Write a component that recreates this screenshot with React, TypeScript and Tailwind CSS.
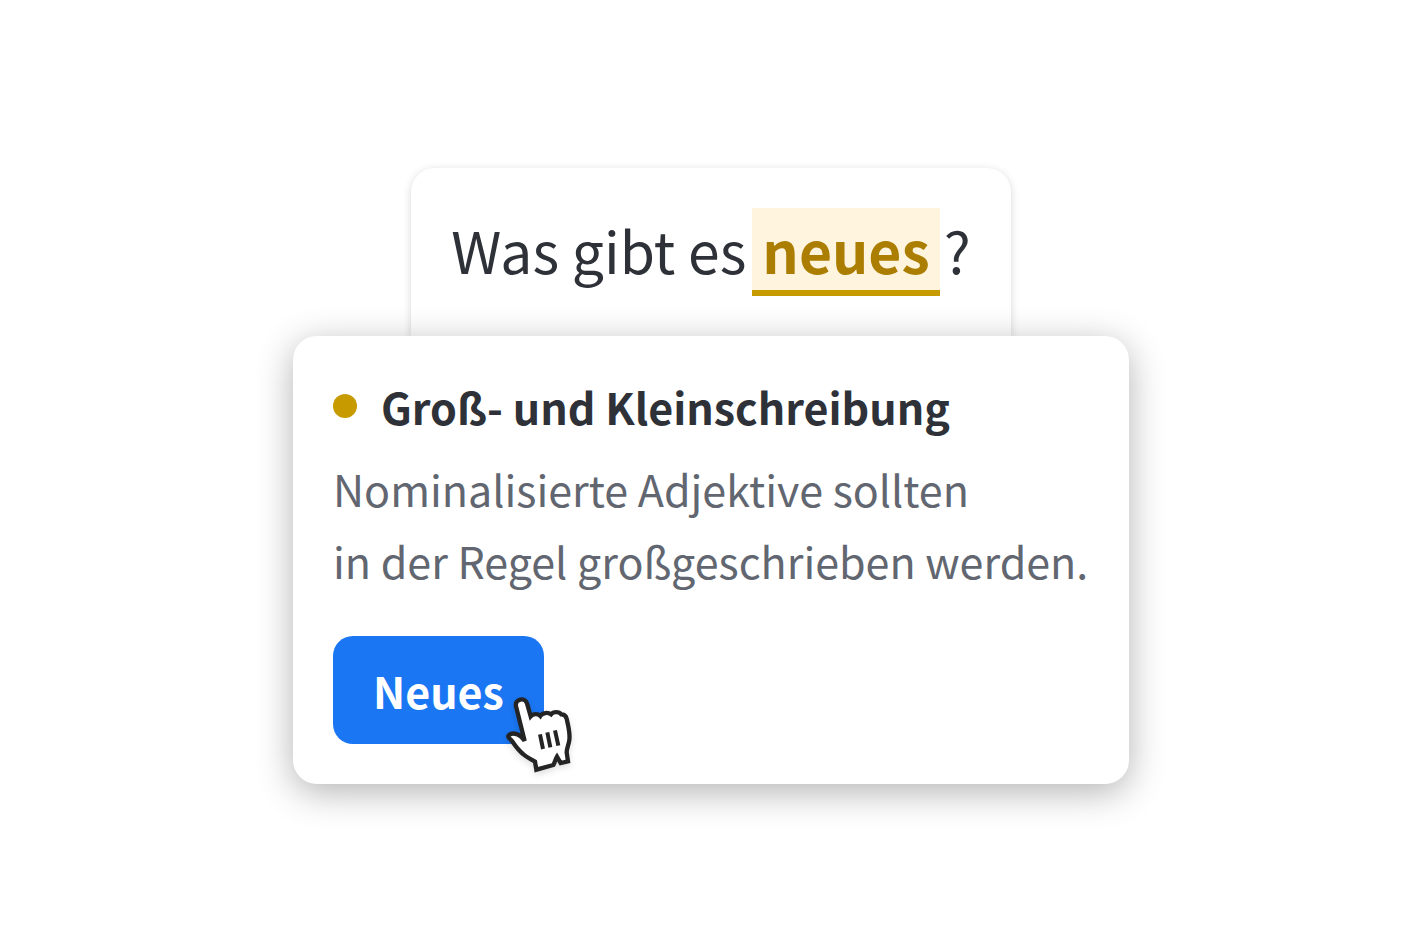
import React from 'react';

const PointerIcon: React.FC = () => (
  <svg aria-hidden="true" className="w-[70px] h-20 overflow-visible drop-shadow-md" viewBox="45 45 210 240" fill="none">
    <path
      d="M78 79C73 57 105 50 111 70L122 109C129 101 143 100 151 108C157 98 174 96 183 103C190 94 207 94 214 103C224 103 228 108 230 116C234 136 241 157 238 180C236 196 230 204 230 217L234 244L212 249L201 230C196 238 195 247 190 255L139 269L135 245C120 236 110 232 99 222C86 211 74 195 66 183C61 176 50 172 57 165C69 155 92 162 104 183Z"
      fill="white"
      stroke="#242424"
      strokeWidth={13}
    />
    <path d="M150 163L159 207M172 157L181 202M195 151L205 197" stroke="#242424" strokeWidth={12} />
  </svg>
);

const App: React.FC = () => {
  return (
    <main className="flex flex-col items-center min-h-screen pt-[168px] pl-0.5 bg-white font-['Noto_Sans_CJK_SC',sans-serif]">
      <section className="p-10 rounded-t-3xl bg-white shadow-[0_2px_8px_rgba(0,0,0,0.16)]">
        <p className="flex text-[57px] leading-[82px] text-[#2e3238] whitespace-nowrap">
          Was gibt es
          <mark className="ml-1.5 mr-1 px-2.5 border-b-6 border-[#c79b00] bg-[#fff5de] font-semibold text-[#ab7d00]">neues</mark>
          ?
        </p>
      </section>

      <section className="relative w-full max-w-[836px] p-10 rounded-3xl bg-white shadow-[0_8px_36px_rgba(0,0,0,0.3)]">
        <h1 className="flex items-center gap-6 text-[43px] leading-[60px] font-bold text-[#2e3238]">
          <span className="w-6 h-6 rounded-full bg-[#c79b00]" />
          Groß- und Kleinschreibung
        </h1>
        <p className="mt-4 text-[43px] leading-[72px] text-[#616670]">
          Nominalisierte Adjektive sollten
          <br />
          in der Regel großgeschrieben werden.
        </p>
        <div className="relative w-fit mt-10">
          <button type="button" className="h-[108px] px-10 rounded-[20px] bg-[#1a76f2] text-[43px] font-bold text-white">
            Neues
          </button>
          <div className="absolute left-[172px] top-[59px] pointer-events-none">
            <PointerIcon />
          </div>
        </div>
      </section>
    </main>
  );
};

export default App;
